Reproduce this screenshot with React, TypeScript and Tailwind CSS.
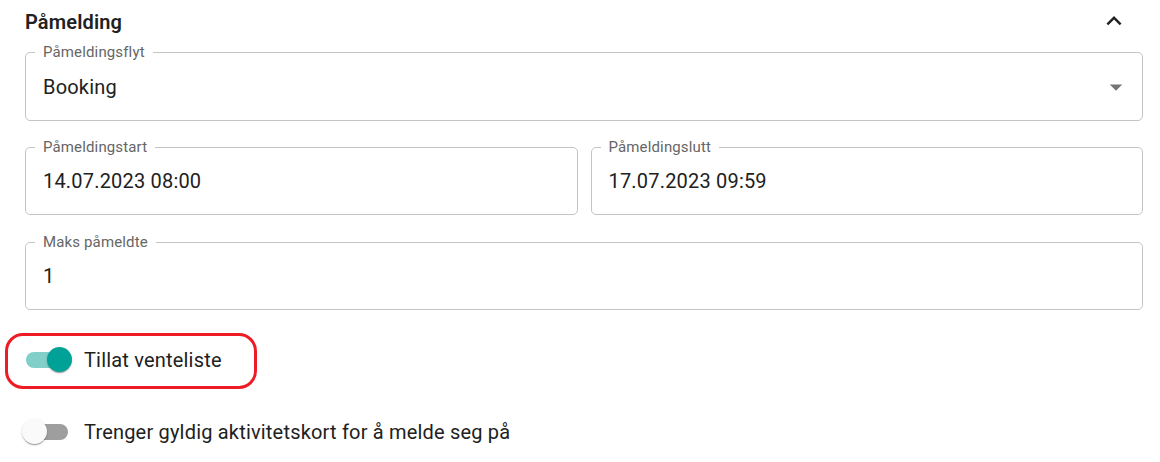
import React from "react";

function Field({ label, value, h = "h-[68px]", dropdown = false }: { label: string; value: string; h?: string; dropdown?: boolean }) {
  return (
    <div className={`relative ${h} w-full rounded-[5px] border border-[#c4c4c4] flex items-center pl-[17px] pr-[11px]`}>
      <span className="absolute left-[9px] top-[-11px] px-[8px] bg-white text-[15px] leading-[20px] tracking-[0.14px] text-[#666666] whitespace-nowrap">
        {label}
      </span>
      <span className="flex-1 text-[20px] leading-[24px] tracking-[0.19px] text-[#212121]">{value}</span>
      {dropdown && (
        <svg width="30" height="30" viewBox="0 0 24 24" className="shrink-0">
          <path d="M7 10l5 5 5-5z" fill="#757575" />
        </svg>
      )}
    </div>
  );
}

function Switch({ on, label }: { on: boolean; label: string }) {
  return (
    <div className="flex items-center h-[48px]">
      <div className="relative w-[72px] h-[48px] -ml-[14px] shrink-0">
        <div className={`absolute left-[15px] top-[16px] w-[42px] h-[16px] rounded-full ${on ? "bg-[#80cfc9]" : "bg-[#9e9e9e]"}`} />
        <div
          className={`absolute top-[11px] w-[25px] h-[25px] rounded-full shadow-[0_2px_1px_-1px_rgba(0,0,0,0.2),0_1px_1px_0_rgba(0,0,0,0.14),0_1px_3px_0_rgba(0,0,0,0.12)] ${
            on ? "left-[36px] bg-[#00a196]" : "left-[11px] bg-[#fafafa]"
          }`}
        />
      </div>
      <span className="ml-[1px] text-[20px] leading-[24px] tracking-[0.19px] text-[#212121] whitespace-nowrap">{label}</span>
    </div>
  );
}

export default function App() {
  return (
    <div className="relative w-[1160px] h-[462px] bg-white overflow-hidden pl-[25px] pr-[17px] font-['Roboto',sans-serif]">
      <div className="h-[34px] flex justify-between items-start">
        <span className="mt-[10px] text-[20px] leading-[24px] font-semibold tracking-[0.15px] text-[#212121]">Påmelding</span>
        <svg width="30" height="30" viewBox="0 0 24 24" className="mt-[6px] mr-[14px]">
          <path d="M12 8l-6 6 1.41 1.41L12 10.83l4.59 4.58L18 14z" fill="#212121" />
        </svg>
      </div>
      <div className="mt-[18px]">
        <Field label="Påmeldingsflyt" value="Booking" h="h-[69px]" dropdown />
      </div>
      <div className="mt-[26px] grid grid-cols-2 gap-[13px]">
        <Field label="Påmeldingstart" value="14.07.2023 08:00" />
        <Field label="Påmeldingslutt" value="17.07.2023 09:59" />
      </div>
      <div className="mt-[27px]">
        <Field label="Maks påmeldte" value="1" />
      </div>
      <div className="mt-[26px]">
        <Switch on label="Tillat venteliste" />
      </div>
      <div className="mt-[24px]">
        <Switch on={false} label="Trenger gyldig aktivitetskort for å melde seg på" />
      </div>
      <div className="absolute left-[5px] top-[333px] w-[252px] h-[56px] border-[3px] border-[#ed1c24] rounded-[18px] pointer-events-none" />
    </div>
  );
}
